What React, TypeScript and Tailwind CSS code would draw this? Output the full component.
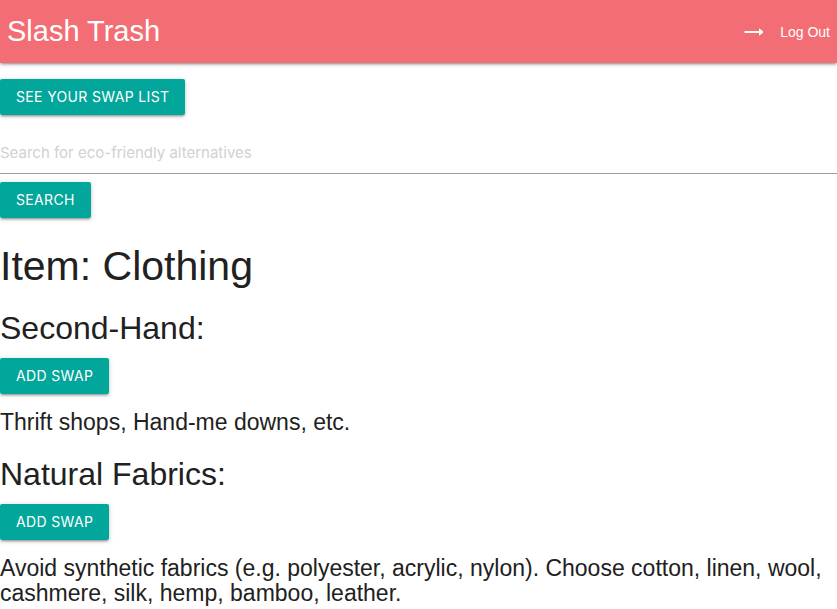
import React from "react";

const raised =
  "h-9 rounded-xs bg-[#03a69b] px-4 font-['Inter','Liberation_Sans',sans-serif] text-sm leading-9 tracking-wide text-white uppercase shadow-[0_2px_2px_rgba(0,0,0,0.14),0_3px_1px_-2px_rgba(0,0,0,0.12),0_1px_5px_rgba(0,0,0,0.2)]";

const swaps = [
  { name: "Second-Hand:", text: "Thrift shops, Hand-me downs, etc." },
  {
    name: "Natural Fabrics:",
    text: "Avoid synthetic fabrics (e.g. polyester, acrylic, nylon). Choose cotton, linen, wool, cashmere, silk, hemp, bamboo, leather.",
  },
];

export default function App() {
  return (
    <div className="bg-white font-['Liberation_Sans',Arial,sans-serif] text-[#212121]">
      <header className="flex h-[63px] items-center justify-between bg-[#f36e74] px-[7px] text-white shadow-[0_2px_2px_rgba(0,0,0,0.14),0_3px_1px_-2px_rgba(0,0,0,0.12),0_1px_5px_rgba(0,0,0,0.2)]">
        <a href="#home" className="text-[29px] leading-none">
          Slash Trash
        </a>
        <a href="#logout" className="flex items-center gap-4 text-sm">
          <svg width="20" height="8" viewBox="0 0 20 8" aria-hidden="true">
            <path d="M0.5 3h14.5V0.3L19 3.2v1.6L15 7.7V5H0.5z" fill="currentColor" />
          </svg>
          Log Out
        </a>
      </header>
      <main>
        <button type="button" className={`${raised} mt-4 block`}>
          See your swap list
        </button>
        <form onSubmit={(e) => e.preventDefault()} className="mt-4">
          <input
            type="search"
            aria-label="Search for eco-friendly alternatives"
            placeholder="Search for eco-friendly alternatives"
            className="mb-2 block h-[43px] w-full border-b border-[#9e9e9e] font-['Inter','Liberation_Sans',sans-serif] text-[15px] outline-none placeholder:text-[#d1d1d1]"
          />
          <button type="submit" className={`${raised} block`}>
            Search
          </button>
        </form>
        <h1 className="mt-[26px] text-[41px] leading-[45px]">Item: Clothing</h1>
        {swaps.map((swap) => (
          <section key={swap.name} className="mt-[21px]">
            <h2 className="mb-3 text-[32px] leading-9">{swap.name}</h2>
            <button type="button" className={`${raised} block`}>
              Add swap
            </button>
            <p className="mt-4 text-[23px] leading-[25px]">{swap.text}</p>
          </section>
        ))}
      </main>
    </div>
  );
}
